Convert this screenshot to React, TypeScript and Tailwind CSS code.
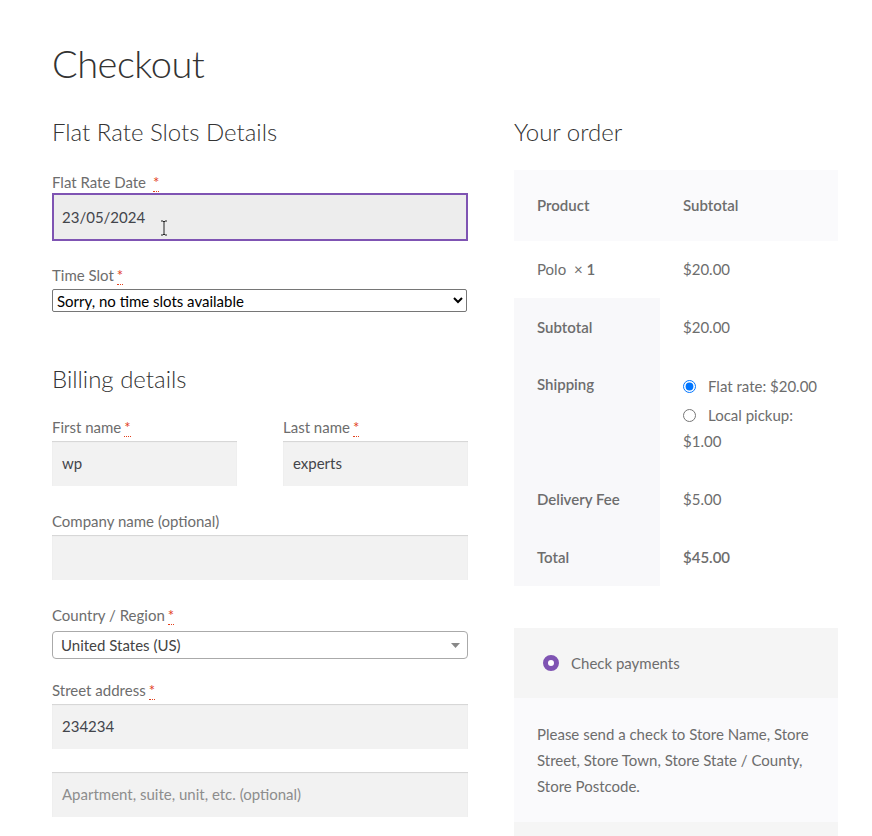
import React from 'react';

const font = { fontFamily: 'Lato, "Noto Sans", sans-serif' };

const Req = () => (
  <abbr title="required" className="ml-[3px] text-[#e2401c] no-underline border-b border-dotted border-[#e2401c] leading-none">
    *
  </abbr>
);

const Label = ({ children, req, tight }: { children: React.ReactNode; req?: boolean; tight?: boolean }) => (
  <label className={tight ? 'block h-[24px] leading-[24px] mb-[-1px] text-[15px] text-[#6d6d6d]' : 'block h-[24px] leading-[24px] mb-[2px] text-[15px] text-[#6d6d6d]'}>
    {children}
    {req && <Req />}
  </label>
);

const TextInput = ({ value, placeholder }: { value?: string; placeholder?: string }) => (
  <div className="h-[45px] w-full bg-[#f2f2f2] shadow-[inset_0_1px_1px_rgba(0,0,0,0.125)] flex items-center px-[10px] text-[15px]">
    {value ? (
      <span className="text-[#43454b]">{value}</span>
    ) : (
      <span className="text-[#8d8d8d]">{placeholder}</span>
    )}
  </div>
);

export default function App() {
  return (
    <div className="min-h-screen bg-white text-[#6d6d6d]" style={font}>
      <div className="px-[52px] pt-[35px]">
        <h1 className="text-[38px] leading-[56px] font-light text-[#333333] tracking-[-0.5px]">Checkout</h1>

        <div className="flex gap-[46px] mt-[25px]">
          {/* Left column */}
          <div className="w-[416px] shrink-0">
            <h3 className="text-[24px] leading-[32px] font-light text-[#333333]">Flat Rate Slots Details</h3>

            <div className="mt-[22px]">
              <Label req tight>Flat Rate Date </Label>
              <div className="relative h-[48px] w-full bg-[#ededed] border-2 border-[#7f54b3] flex items-center px-[8px] text-[15px] text-[#43454b]">
                23/05/2024
                <svg className="absolute left-[106px] top-[25px]" width="8" height="16" viewBox="0 0 8 16">
                  <path d="M1 1h2l1 1 1-1h2M4 2v12M1 15h2l1-1 1 1h2" stroke="#222" strokeWidth="1" fill="none" />
                </svg>
              </div>
            </div>

            <div className="mt-[22px]">
              <Label req>Time Slot</Label>
              <select className="block w-[415px] h-[23px] border border-[#767676] rounded-[2px] bg-white text-[15px] text-black px-0" style={font}>
                <option>Sorry, no time slots available</option>
              </select>
            </div>

            <h3 className="mt-[51px] text-[24px] leading-[32px] font-light text-[#333333]">Billing details</h3>

            <div className="mt-[20px] flex gap-[46px]">
              <div className="w-[185px]">
                <Label req>First name</Label>
                <TextInput value="wp" />
              </div>
              <div className="w-[185px]">
                <Label req>Last name</Label>
                <TextInput value="experts" />
              </div>
            </div>

            <div className="mt-[23px]">
              <Label>Company name (optional)</Label>
              <TextInput />
            </div>

            <div className="mt-[23px]">
              <Label req>Country / Region</Label>
              <div className="h-[28px] mt-[4px] w-full border border-[#aaaaaa] rounded-[4px] bg-white flex items-center justify-between pl-[8px] pr-[7px] text-[15px] text-[#444444]">
                <span>United States (US)</span>
                <svg width="9" height="5" viewBox="0 0 9 5">
                  <path d="M0 0h9L4.5 5z" fill="#888888" />
                </svg>
              </div>
            </div>

            <div className="mt-[19px]">
              <Label req>Street address</Label>
              <TextInput value="234234" />
            </div>

            <div className="mt-[23px]">
              <TextInput placeholder="Apartment, suite, unit, etc. (optional)" />
            </div>
          </div>

          {/* Right column */}
          <div className="w-[324px] shrink-0">
            <h3 className="text-[24px] leading-[32px] font-light text-[#333333]">Your order</h3>

            <div className="mt-[22px] text-[15px]">
              <div className="flex h-[71px] items-center bg-[#fafafc] font-semibold">
                <div className="w-[146px] pl-[23px]">Product</div>
                <div className="pl-[23px]">Subtotal</div>
              </div>
              <div className="flex h-[57px] items-center bg-white">
                <div className="w-[146px] pl-[23px]">
                  Polo <span className="ml-[4px]">×&nbsp;<strong className="font-semibold">1</strong></span>
                </div>
                <div className="pl-[23px]">$20.00</div>
              </div>

              <div className="flex">
                <div className="w-[146px] bg-[#f8f8fa] font-semibold">
                  <div className="h-[58px] flex items-center pl-[23px]">Subtotal</div>
                  <div className="h-[114px] pl-[23px] pt-[17px]">Shipping</div>
                  <div className="h-[58px] flex items-center pl-[23px]">Delivery Fee</div>
                  <div className="h-[58px] flex items-center pl-[23px]">Total</div>
                </div>
                <div className="flex-1 bg-white">
                  <div className="h-[58px] flex items-center pl-[23px]">$20.00</div>
                  <div className="h-[114px] pl-[23px] pt-[17px] leading-[26px]">
                    <label className="flex items-center">
                      <input type="radio" name="ship" defaultChecked className="m-0 mr-[12px] w-[13px] h-[13px]" />
                      Flat rate: $20.00
                    </label>
                    <label className="block mt-[3px] pr-[30px]">
                      <input type="radio" name="ship" className="m-0 mr-[12px] w-[13px] h-[13px] align-[-1px]" />
                      Local pickup: $1.00
                    </label>
                  </div>
                  <div className="h-[58px] flex items-center pl-[23px]">$5.00</div>
                  <div className="h-[58px] flex items-center pl-[23px] font-semibold">$45.00</div>
                </div>
              </div>
            </div>

            <div className="mt-[42px] text-[15px]">
              <div className="h-[70px] bg-[#f5f5f5] flex items-center pl-[29px]">
                <span className="w-[16px] h-[16px] rounded-full border-[5px] border-[#7f54b3] bg-white mr-[12px]" />
                Check payments
              </div>
              <div className="bg-[#fafafc] px-[23px] pt-[23px] pb-[23px] leading-[26px] h-[124px]">
                Please send a check to Store Name, Store Street, Store Town, Store State / County, Store Postcode.
              </div>
              <div className="h-[40px] bg-[#f5f5f5]" />
            </div>
          </div>
        </div>
      </div>
    </div>
  );
}
